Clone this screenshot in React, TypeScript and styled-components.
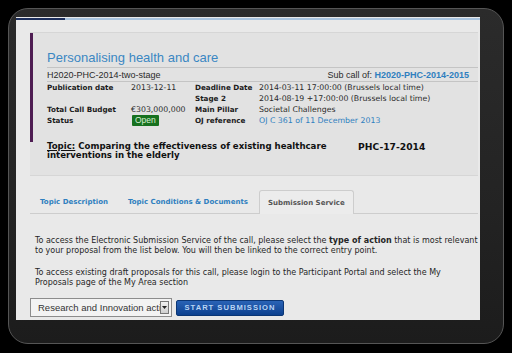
import styled, { createGlobalStyle } from 'styled-components';

const GlobalStyle = createGlobalStyle`
	html, body {
		margin: 0;
		padding: 0;
		background: #000;
	}
	body {
		font-family: 'DejaVu Sans', Verdana, sans-serif;
	}
`;

const Stage = styled.div`
	width: 512px;
	height: 353px;
	padding: 8px 0 0 8px;
	box-sizing: border-box;
	background: #000;
`;

const Frame = styled.div`
	width: 496px;
	height: 336px;
	box-sizing: border-box;
	padding: 8px 23px 23px 7px;
	border: 1px solid #555;
	border-radius: 20px;
	background: linear-gradient(180deg, #2b2b2b 0%, #232323 60%, #1c1c1c 100%);
`;

const Screen = styled.div`
	width: 464px;
	height: 303px;
	overflow: hidden;
	background: #e9e9e9;
	display: flex;
	flex-direction: column;
`;

const TopBar = styled.div`
	height: 3px;
	flex: none;
	display: flex;
	background: #e9e9e9;
	padding-top: 1px;
	box-sizing: border-box;
`;

const BarSegment = styled.div<{ $dark?: boolean }>`
	height: 2px;
	width: ${(p) => (p.$dark ? '49px' : 'auto')};
	flex: ${(p) => (p.$dark ? 'none' : '1')};
	background: ${(p) => (p.$dark ? '#1d2f5c' : '#a8c3de')};
`;

const Main = styled.div`
	padding: 12px 2px 0 14px;
	display: flex;
	flex-direction: column;
`;

const Card = styled.section`
	background: #e2e2e2;
	border: 1px solid #d6d6d6;
	border-left: none;
	border-right: none;
	padding-bottom: 15px;
`;

const Header = styled.div`
	border-left: 3px solid #4e1d52;
	padding: 16px 0 16px 14px;
`;

const Title = styled.h1`
	margin: 0;
	font-family: 'Liberation Sans', Arial, sans-serif;
	font-weight: normal;
	font-size: 13px;
	line-height: 18px;
	color: #3b87c2;
	border-bottom: 1px solid #c4c4c4;
`;

const CodeRow = styled.div`
	display: flex;
	justify-content: space-between;
	align-items: center;
	height: 13px;
	font-family: 'Liberation Sans', Arial, sans-serif;
	font-size: 9px;
	color: #2a2a2a;
	border-bottom: 1px solid #c4c4c4;
	padding-right: 9px;
`;

const SubCall = styled.span`
	a {
		color: #2f7fbf;
		font-weight: bold;
		text-decoration: none;
	}
`;

const InfoGrid = styled.div`
	display: grid;
	grid-template-columns: 84px 64px 64px 1fr;
	grid-auto-rows: 11px;
	align-items: center;
	font-size: 7.8px;
	color: #2a2a2a;
`;

const Label = styled.span`
	font-weight: bold;
	font-size: 7.2px;
	color: #1c1c1c;
`;

const Value = styled.span<{ $link?: boolean }>`
	white-space: nowrap;
	color: ${(p) => (p.$link ? '#2f7fbf' : '#2a2a2a')};
`;

const Badge = styled.span`
	justify-self: start;
	margin-left: 1px;
	background: #17711f;
	color: #d7f0d2;
	padding: 0 3px;
	line-height: 11px;
	font-family: 'Liberation Sans', Arial, sans-serif;
	font-size: 8.5px;
	border-radius: 1px;
`;

const TopicRow = styled.div`
	display: flex;
	align-items: flex-start;
	padding-left: 17px;
	font-weight: bold;
	font-size: 8.6px;
	line-height: 9px;
	color: #111;
`;

const TopicText = styled.div`
	width: 311px;
	u {
		text-decoration: underline;
	}
`;

const TopicCode = styled.div`
	font-size: 9.2px;
`;

const Tabs = styled.nav`
	margin-top: 13px;
	display: flex;
	align-items: flex-end;
	height: 24px;
	border-bottom: 1px solid #cdcdcd;
	padding-left: 1px;
`;

const Tab = styled.div<{ $active?: boolean }>`
	height: ${(p) => (p.$active ? '24px' : '23px')};
	box-sizing: border-box;
	display: flex;
	align-items: center;
	padding: 0 8px;
	margin-bottom: ${(p) => (p.$active ? '-1px' : '0')};
	font-size: 7px;
	font-weight: bold;
	color: ${(p) => (p.$active ? '#555' : '#2f7fbf')};
	background: ${(p) => (p.$active ? '#ececec' : 'transparent')};
	border: 1px solid ${(p) => (p.$active ? '#cdcdcd' : 'transparent')};
	border-bottom: none;
	border-radius: 3px 3px 0 0;
	margin-right: 2px;
`;

const Body = styled.div`
	padding: 22px 0 0 5px;
	font-size: 8px;
	line-height: 10px;
	color: #262626;
`;

const Para = styled.p`
	margin: 0 0 12px;
`;

const Actions = styled.div`
	display: flex;
	align-items: center;
	gap: 4px;
	margin-top: -2px;
	margin-left: -5px;
`;

const SelectBox = styled.div`
	width: 142px;
	height: 19px;
	box-sizing: border-box;
	border: 1px solid #8c8c8c;
	background: #f3f3f3;
	display: flex;
	align-items: center;
	padding: 0 2px 0 7px;
	font-family: 'Liberation Sans', Arial, sans-serif;
	font-size: 9.5px;
	color: #333;
`;

const SelectText = styled.span`
	flex: 1;
	overflow: hidden;
	white-space: nowrap;
`;

const SelectArrow = styled.span`
	width: 9px;
	height: 13px;
	box-sizing: border-box;
	border: 1px solid #777;
	background: linear-gradient(#f0f0f0, #cfcfcf);
	display: flex;
	align-items: center;
	justify-content: center;
	svg {
		width: 5px;
		height: 3px;
	}
`;

const SubmitButton = styled.button`
	height: 16px;
	width: 108px;
	padding: 0;
	border: 1px solid #0b3675;
	border-radius: 2px;
	background: linear-gradient(180deg, #2a63b6 0%, #0d418f 100%);
	color: #b9d4f4;
	font-family: 'Liberation Sans', Arial, sans-serif;
	font-weight: bold;
	font-size: 7.6px;
	letter-spacing: 1px;
	cursor: pointer;
`;

export default function App() {
	return (
		<Stage>
			<GlobalStyle />
			<Frame>
				<Screen>
					<TopBar>
						<BarSegment $dark />
						<BarSegment />
					</TopBar>
					<Main>
						<Card>
							<Header>
								<Title>Personalising health and care</Title>
								<CodeRow>
									<span>H2020-PHC-2014-two-stage</span>
									<SubCall>
										Sub call of: <a>H2020-PHC-2014-2015</a>
									</SubCall>
								</CodeRow>
								<InfoGrid>
									<Label>Publication date</Label>
									<Value>2013-12-11</Value>
									<Label>Deadline Date</Label>
									<Value>2014-03-11 17:00:00 (Brussels local time)</Value>
									<span />
									<span />
									<Label>Stage 2</Label>
									<Value>2014-08-19 +17:00:00 (Brussels local time)</Value>
									<Label>Total Call Budget</Label>
									<Value>€303,000,000</Value>
									<Label>Main Pillar</Label>
									<Value>Societal Challenges</Value>
									<Label>Status</Label>
									<Badge>Open</Badge>
									<Label>OJ reference</Label>
									<Value $link>OJ C 361 of 11 December 2013</Value>
								</InfoGrid>
							</Header>
							<TopicRow>
								<TopicText>
									<u>Topic:</u> Comparing the effectiveness of existing healthcare
									interventions in the elderly
								</TopicText>
								<TopicCode>PHC-17-2014</TopicCode>
							</TopicRow>
						</Card>
						<Tabs>
							<Tab>Topic Description</Tab>
							<Tab>Topic Conditions &amp; Documents</Tab>
							<Tab $active>Submission Service</Tab>
						</Tabs>
						<Body>
							<Para>
								To access the Electronic Submission Service of the call, please select the{' '}
								<b>type of action</b> that is most relevant to your proposal from the list
								below. You will then be linked to the correct entry point.
							</Para>
							<Para>
								To access existing draft proposals for this call, please login to the
								Participant Portal and select the My Proposals page of the My Area section
							</Para>
							<Actions>
								<SelectBox>
									<SelectText>Research and Innovation action</SelectText>
									<SelectArrow>
										<svg viewBox="0 0 5 3">
											<path d="M0 0h5L2.5 3z" fill="#222" />
										</svg>
									</SelectArrow>
								</SelectBox>
								<SubmitButton>START SUBMISSION</SubmitButton>
							</Actions>
						</Body>
					</Main>
				</Screen>
			</Frame>
		</Stage>
	);
}
